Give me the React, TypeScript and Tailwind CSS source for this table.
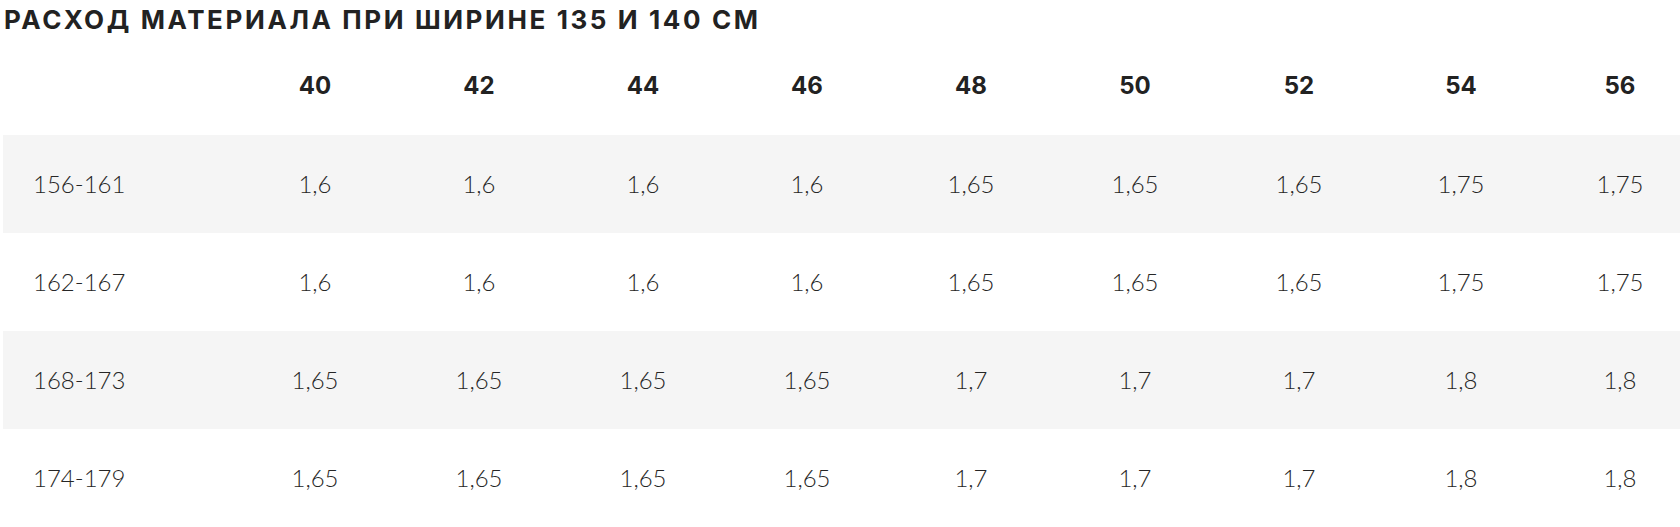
const sizes = ["40", "42", "44", "46", "48", "50", "52", "54", "56"]

const rows: { label: string; values: string[] }[] = [
  { label: "156-161", values: ["1,6", "1,6", "1,6", "1,6", "1,65", "1,65", "1,65", "1,75", "1,75"] },
  { label: "162-167", values: ["1,6", "1,6", "1,6", "1,6", "1,65", "1,65", "1,65", "1,75", "1,75"] },
  { label: "168-173", values: ["1,65", "1,65", "1,65", "1,65", "1,7", "1,7", "1,7", "1,8", "1,8"] },
  { label: "174-179", values: ["1,65", "1,65", "1,65", "1,65", "1,7", "1,7", "1,7", "1,8", "1,8"] },
]

const cols = "grid grid-cols-[230px_164px_164px_164px_164px_164px_164px_164px_160px_158px]"

export default function App() {
  return (
    <div className="w-[1680px] h-[527px] overflow-hidden bg-white pl-[3px] text-[#222]">
      <h2 className="h-[37px] pl-[1px] pt-[4px] font-['Inter',sans-serif] text-[26px] font-bold uppercase leading-[32px] tracking-[0.1em]">
        Расход материала при ширине 135 и 140 см
      </h2>

      <div className="w-[1700px]">
        <div className={`${cols} h-[98px] items-center font-['Inter',sans-serif] text-[24px] font-bold`}>
          <div />
          {sizes.map((s) => (
            <div key={s} className="text-center">
              {s}
            </div>
          ))}
        </div>

        {rows.map((row, i) => (
          <div
            key={row.label}
            className={`${cols} h-[98px] items-center font-['Lato',sans-serif] text-[24px] font-light text-[#262626] ${
              i % 2 === 0 ? "bg-[#f5f5f5]" : "bg-white"
            }`}
          >
            <div className="pl-[30px]">{row.label}</div>
            {row.values.map((v, j) => (
              <div key={j} className="text-center">
                {v}
              </div>
            ))}
          </div>
        ))}
      </div>
    </div>
  )
}
